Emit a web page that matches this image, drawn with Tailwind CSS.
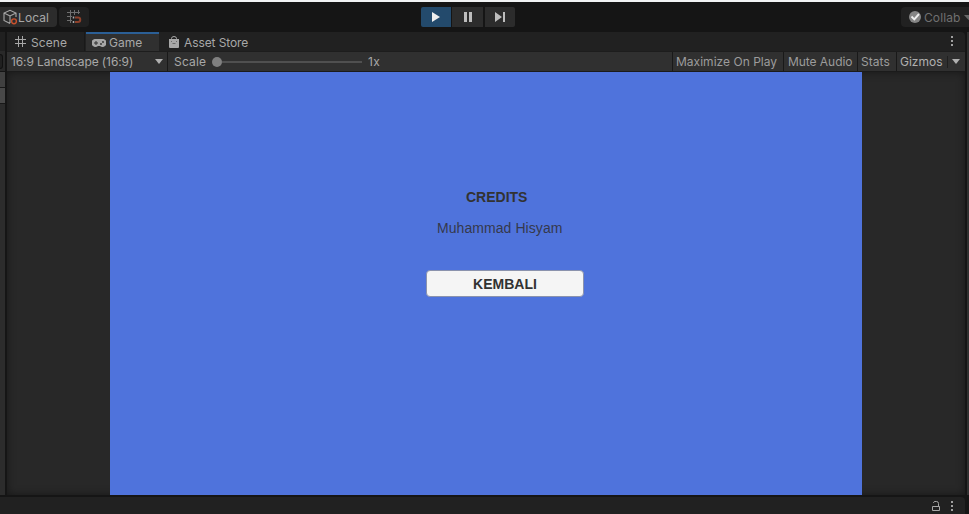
<!DOCTYPE html>
<html lang="id">
<head>
<meta charset="utf-8">
<title>Game</title>
<script src="https://cdn.jsdelivr.net/npm/@tailwindcss/browser@4"></script>
</head>
<body class="w-[969px] h-[514px] overflow-hidden bg-[#151515] flex flex-col font-['Inter',sans-serif] text-[12px] leading-[20px] tracking-[0.3px] text-[#a8a8a8] whitespace-nowrap">
  <div class="h-[2px] bg-[#f1f3f4] shrink-0"></div>
  <header class="h-[30px] shrink-0 flex pt-[5px] overflow-hidden">
    <div class="w-[57px] h-[20px] shrink-0 bg-[#2c2c2c] rounded-r-sm flex items-center">
      <svg class="w-[18px] h-[18px] shrink-0" viewBox="0 0 18 18" fill="none" stroke="#a8a8a8" stroke-width="1.1">
        <path d="M10 15.500 4 12.500V5l6-2.700L16 5v4M4 5l6 3 6-3M10 8v7"/>
        <circle cx="14" cy="13.300" r="2.400" fill="#2c2c2c" stroke="#c9512d" stroke-width="1.400"/>
      </svg>
      <span class="mt-[2px] tracking-[0.1px]">Local</span>
    </div>
    <div class="ml-[2px] w-[30px] h-[20px] shrink-0 bg-[#202020] rounded-sm flex items-center justify-center">
      <svg class="w-[16px] h-[16px]" viewBox="0 0 16 16" fill="none" stroke="#6f6f6f" stroke-width="1">
        <path d="M4.500 1v13M8.500 1v5M12.500 1v4M1 3.500h13M1 7.500h5M1 11.500h5"/>
        <path d="M9 8.500h3a2.200 2.200 0 0 1 0 4.500H9" stroke="#8d412b" stroke-width="2"/>
        <path d="M7.500 7.500v2M7.500 12v2" stroke="#aaa" stroke-width="1.500"/>
      </svg>
    </div>
    <div class="ml-[332px] shrink-0 flex gap-px">
      <div class="w-[30px] h-[20px] bg-[#234a6c] rounded-l-xs">
        <svg class="w-[30px] h-[20px]" viewBox="0 0 30 20"><path d="M11 5v10l8-5z" fill="#eee"/></svg>
      </div>
      <div class="w-[31px] h-[20px] bg-[#2c2c2c]">
        <svg class="w-[31px] h-[20px]" viewBox="0 0 31 20"><path d="M12 5h3v10h-3zM17 5h3v10h-3z" fill="#bdbdbd"/></svg>
      </div>
      <div class="ml-px w-[30px] h-[20px] bg-[#2c2c2c] rounded-r-xs">
        <svg class="w-[30px] h-[20px]" viewBox="0 0 30 20"><path d="M10 5v10l7-5zM18 5h2v10h-2z" fill="#bdbdbd"/></svg>
      </div>
    </div>
    <div class="ml-[386px] w-[80px] h-[20px] shrink-0 bg-[#212121] rounded-sm flex items-center text-[#707070]">
      <svg class="ml-[8px] w-[12px] h-[12px] shrink-0" viewBox="0 0 12 12"><circle cx="6" cy="6" r="6" fill="#858585"/><path d="M2.500 5.500 5.300 8.300 10 3" stroke="#eee" stroke-width="1.900" fill="none"/></svg>
      <span class="ml-[3px] mt-[2px] w-[38px] shrink-0 tracking-[0.1px]">Collab</span>
      <svg class="ml-[2px] w-[9px] h-[5px] shrink-0" viewBox="0 0 9 5"><path d="M0 0h9L4.500 5z" fill="#666"/></svg>
    </div>
  </header>
  <div class="h-[463px] shrink-0 flex">
    <aside class="w-[5px] flex flex-col bg-[#2c2c2c]">
      <div class="h-[19px] bg-[#202020]"></div>
      <div class="h-[21px] bg-[#292929] border-b border-[#151515] flex items-center"><div class="w-[3px] h-[15px] border border-l-0 border-[#111] bg-[#202020] rounded-r-sm"></div></div>
      <div class="h-[16px] bg-[#404040] border-b border-[#181818]"></div>
      <div class="h-[16px] bg-[#484848] border-b border-[#181818]"></div>
    </aside>
    <main class="ml-[2px] w-[958px] flex flex-col">
      <nav class="h-[19px] shrink-0 bg-[#212121] rounded-tr-sm flex">
        <div class="w-[78px] flex items-center border-r border-[#191919]">
          <svg class="ml-[8px] w-[11px] h-[11px]" viewBox="0 0 11 11" stroke="#a8a8a8"><path d="M3.500 0v11M7.500 0v11M0 3.500h11M0 7.500h11"/></svg>
          <span class="ml-[5px] mt-[2px] tracking-[0.1px]">Scene</span>
        </div>
        <div class="ml-px w-[73px] flex items-center border-t-2 border-[#2b5f96] bg-[#303030]">
          <svg class="ml-[6px] w-[14px] h-[8px]" viewBox="0 0 14 8"><path d="M4 0h6a4 4 0 1 1-2 7H6a4 4 0 1 1-2-7z" fill="#a8a8a8"/><path d="M2 4h4M4 2v4" stroke="#303030"/><circle cx="9" cy="5" r=".9" fill="#303030"/><circle cx="11" cy="3" r=".9" fill="#303030"/></svg>
          <span class="ml-[3px] tracking-[0.05px]">Game</span>
        </div>
        <div class="flex items-center">
          <svg class="ml-[10px] w-[10px] h-[12px]" viewBox="0 0 10 12"><path d="M0 3h10v8q0 1-1 1H1q-1 0-1-1z" fill="#a8a8a8"/><path d="M2.500 4V2.500Q2.500.5 5 .5t2.500 2V4" fill="none" stroke="#a8a8a8"/><path d="M2 5.500h1M7 5.500h1M3.500 7.500h3" stroke="#6a6a6a"/></svg>
          <span class="ml-[5px] mt-[2px] tracking-[-0.1px]">Asset Store</span>
        </div>
        <svg class="ml-auto mr-[12px] mt-[4px] w-[2px] h-[10px]" viewBox="0 0 2 10" fill="#a0a0a0"><path d="M0 0h2v2H0zM0 4h2v2H0zM0 8h2v2H0z"/></svg>
      </nav>
      <div class="h-[21px] shrink-0 bg-[#303030] border-t border-b border-t-[#1d1d1d] border-b-[#1b1b1b] flex items-center">
        <div class="w-[161px] h-full flex items-center border-r border-[#191919] pl-[4px]">
          <span class="w-[124px] tracking-[-0.1px]">16:9 Landscape (16:9)</span>
          <svg class="ml-[20px] w-[8px] h-[5px]" viewBox="0 0 8 5"><path d="M0 0h8L4 5z" fill="#b0b0b0"/></svg>
        </div>
        <span class="ml-[6px] w-[38px] tracking-[0.2px]">Scale</span>
        <div class="w-[10px] h-[10px] rounded-full bg-[#808080]"></div>
        <div class="w-[140px] h-[2px] bg-[#505050]"></div>
        <span class="ml-[6px]">1x</span>
        <div class="ml-auto h-full flex text-[#9c9c9c]">
          <div class="w-[111px] border-l border-[#191919] pl-[3px] tracking-[0.02px]">Maximize On Play</div>
          <div class="w-[74px] border-l border-[#191919] pl-[4px] tracking-[-0.05px]">Mute Audio</div>
          <div class="w-[39px] border-l border-[#191919] pl-[3px] tracking-[0.05px]">Stats</div>
          <div class="w-[51px] border-l border-[#191919] pl-[3px] tracking-[0px] text-[#b0b0b0]">Gizmos</div>
          <div class="w-[18px] flex items-center"><div class="w-px h-[12px] bg-[#1f1f1f]"></div><svg class="ml-[4px] w-[8px] h-[5px]" viewBox="0 0 8 5"><path d="M0 0h8L4 5z" fill="#b0b0b0"/></svg></div>
        </div>
      </div>
      <section class="h-[423px] bg-[#282828] shadow-[inset_0_0_8px_rgba(0,0,0,0.45)] pl-[103px]">
        <div class="w-[752px] h-full bg-[#4f73dc] font-['Liberation_Sans',sans-serif] text-[#323232] tracking-normal flex flex-col items-start">
          <h1 class="mt-[115px] ml-[356px] font-bold text-[14px]">CREDITS</h1>
          <p class="mt-[11px] ml-[327px] text-[14px] tracking-[0.07px] text-[#35394c]">Muhammad Hisyam</p>
          <button class="mt-[32px] ml-[316px] w-[158px] h-[27px] rounded-[4px] bg-[#f5f5f5] border border-[#8b93ad] font-bold text-[14px] leading-[26px] text-center">KEMBALI</button>
        </div>
      </section>
    </main>
    <aside class="ml-[2px] w-[2px] bg-[#303030]"></aside>
  </div>
  <footer class="mt-[2px] h-[17px] w-[965px] shrink-0 bg-[#212121] rounded-tr-sm flex">
    <svg class="ml-[932px] mt-[4px] w-[8px] h-[10px] shrink-0" viewBox="0 0 8 10" fill="none" stroke="#a8a8a8"><path d="M.5 5.500h7v4h-7zM1.500 2V1.500Q2 .5 3 .5h1.500q2 0 2 2v3"/></svg>
    <svg class="ml-[11px] mt-[4px] w-[2px] h-[10px] shrink-0" viewBox="0 0 2 10" fill="#a0a0a0"><path d="M0 0h2v2H0zM0 4h2v2H0zM0 8h2v2H0z"/></svg>
  </footer>
</body>
</html>
